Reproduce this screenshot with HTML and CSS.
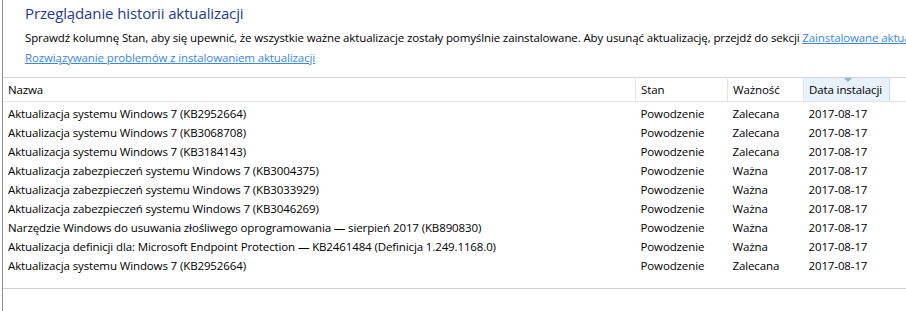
FILE: index.html
```html
<!DOCTYPE html>
<html lang="pl">
  <head>
    <meta charset="UTF-8" />
    <meta name="viewport" content="width=device-width, initial-scale=1.0" />
    <title>Historia aktualizacji</title>
    <link rel="stylesheet" href="styles.css">
  </head>
  <body>
    <div class="window">
      <!-- Nagłówek z opisem -->
      <div class="intro">
        <h1>Przeglądanie historii aktualizacji</h1>
        <p class="desc">
          Sprawdź kolumnę Stan, aby się upewnić, że wszystkie ważne aktualizacje zostały pomyślnie zainstalowane. Aby usunąć aktualizację, przejdź do sekcji <a href="#">Zainstalowane aktualizacje</a>.
        </p>
        <p class="help"><a href="#">Rozwiązywanie problemów z instalowaniem aktualizacji</a></p>
      </div>

      <!-- Lista aktualizacji -->
      <table class="history">
        <thead>
          <tr>
            <th class="col-name">Nazwa</th>
            <th class="col-state">Stan</th>
            <th class="col-level">Ważność</th>
            <th class="col-date sorted">Data instalacji<span class="arrow"></span></th>
            <th class="col-rest"></th>
          </tr>
        </thead>
        <tbody>
          <tr><td>Aktualizacja systemu Windows 7 (KB2952664)</td><td>Powodzenie</td><td>Zalecana</td><td>2017-08-17</td><td></td></tr>
          <tr><td>Aktualizacja systemu Windows 7 (KB3068708)</td><td>Powodzenie</td><td>Zalecana</td><td>2017-08-17</td><td></td></tr>
          <tr><td>Aktualizacja systemu Windows 7 (KB3184143)</td><td>Powodzenie</td><td>Zalecana</td><td>2017-08-17</td><td></td></tr>
          <tr><td>Aktualizacja zabezpieczeń systemu Windows 7 (KB3004375)</td><td>Powodzenie</td><td>Ważna</td><td>2017-08-17</td><td></td></tr>
          <tr><td>Aktualizacja zabezpieczeń systemu Windows 7 (KB3033929)</td><td>Powodzenie</td><td>Ważna</td><td>2017-08-17</td><td></td></tr>
          <tr><td>Aktualizacja zabezpieczeń systemu Windows 7 (KB3046269)</td><td>Powodzenie</td><td>Ważna</td><td>2017-08-17</td><td></td></tr>
          <tr><td>Narzędzie Windows do usuwania złośliwego oprogramowania — sierpień 2017 (KB890830)</td><td>Powodzenie</td><td>Ważna</td><td>2017-08-17</td><td></td></tr>
          <tr><td>Aktualizacja definicji dla: Microsoft Endpoint Protection — KB2461484 (Definicja 1.249.1168.0)</td><td>Powodzenie</td><td>Ważna</td><td>2017-08-17</td><td></td></tr>
          <tr><td>Aktualizacja systemu Windows 7 (KB2952664)</td><td>Powodzenie</td><td>Zalecana</td><td>2017-08-17</td><td></td></tr>
        </tbody>
      </table>
      <div class="list-end"></div>
    </div>
  </body>
</html>
```

FILE: styles.css
```css
html,
body {
  margin: 0;
  height: 100%;
  background: #fff;
  overflow: hidden;
}
body {
  font-family: "Open Sans", "Noto Sans", sans-serif;
  font-size: 11.5px;
  letter-spacing: -0.12px;
  color: #000;
}
.window {
  height: 100%;
  margin-left: 2px;
  border-left: 1px solid #8e8e8e;
}
.intro {
  padding: 0 0 0 22px;
  height: 77px;
  white-space: nowrap;
  overflow: hidden;
}
h1 {
  margin: 0;
  padding-top: 2px;
  font-size: 15px;
  font-weight: normal;
  line-height: 22px;
  color: #1e3c8c;
}
.desc {
  margin: 5px 0 0;
  line-height: 18px;
}
.help {
  margin: 2px 0 0;
  line-height: 18px;
}
a {
  color: #3a88dc;
}
.history {
  border-collapse: collapse;
  width: 100%;
  table-layout: fixed;
}
.history th {
  font-weight: normal;
  text-align: left;
  height: 23px;
  padding: 0 0 0 5px;
  border-top: 1px solid #d5d5d5;
  border-bottom: 1px solid #e5e5e5;
  border-right: 1px solid #e5e5e5;
  position: relative;
}
.history th.sorted {
  background: #e8f2fb;
  border-right-color: #c6ddf2;
  border-left: 1px solid #c6ddf2;
}
.history th .arrow {
  position: absolute;
  top: 0;
  left: 40px;
  border-left: 4px solid transparent;
  border-right: 4px solid transparent;
  border-top: 4px solid #97b0c8;
}
.history th.col-rest {
  border-right: none;
}
.col-name { width: 627px; }
.col-state { width: 86px; }
.col-level { width: 70px; }
.col-date { width: 80px; }
.history td {
  height: 19px;
  padding: 0 0 0 5px;
  white-space: nowrap;
  overflow: hidden;
}
.history tbody tr:first-child td {
  height: 19px;
  padding-top: 2px;
}
.list-end {
  margin-top: 13px;
  border-top: 1px solid #cfcfcf;
}
```
